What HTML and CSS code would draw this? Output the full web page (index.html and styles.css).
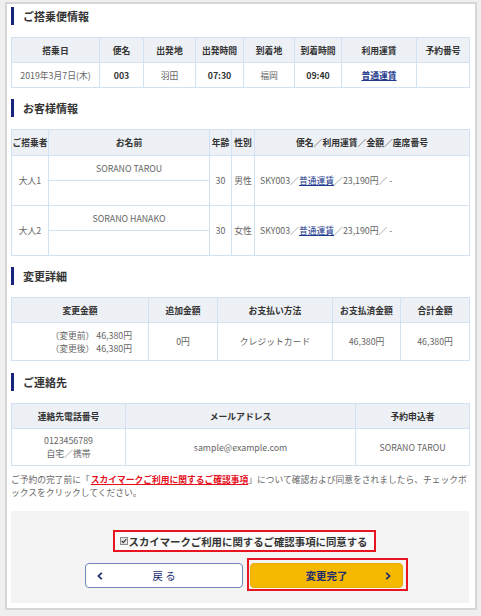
FILE: index.html
```html
<!DOCTYPE html>
<html lang="ja">
<head>
<meta charset="utf-8">
<title>変更内容の確認</title>
<link rel="stylesheet" href="styles.css">
</head>
<body>
<div class="page">

  <section class="sec">
    <h2 class="sec-title">ご搭乗便情報</h2>
    <table class="tbl tbl-flight">
      <colgroup>
        <col style="width:88px"><col style="width:44px"><col style="width:52px"><col style="width:48px">
        <col style="width:51px"><col style="width:47px"><col style="width:75px"><col style="width:53px">
      </colgroup>
      <tr>
        <th>搭乗日</th><th>便名</th><th>出発地</th><th>出発時間</th>
        <th>到着地</th><th>到着時間</th><th>利用運賃</th><th>予約番号</th>
      </tr>
      <tr>
        <td>2019年3月7日(木)</td>
        <td class="strong">003</td>
        <td>羽田</td>
        <td class="strong">07:30</td>
        <td>福岡</td>
        <td class="strong">09:40</td>
        <td><a class="fare strong" href="#">普通運賃</a></td>
        <td></td>
      </tr>
    </table>
  </section>

  <section class="sec">
    <h2 class="sec-title">お客様情報</h2>
    <table class="tbl tbl-pax">
      <colgroup>
        <col style="width:37px"><col style="width:161px"><col style="width:22px"><col style="width:23px"><col style="width:215px">
      </colgroup>
      <tr>
        <th>ご搭乗者</th><th>お名前</th><th>年齢</th><th>性別</th><th>便名／利用運賃／金額／座席番号</th>
      </tr>
      <tr>
        <td rowspan="2">大人1</td>
        <td>SORANO TAROU</td>
        <td rowspan="2">30</td>
        <td rowspan="2">男性</td>
        <td rowspan="2" class="left">SKY003／<a class="fare" href="#">普通運賃</a>／23,190円／ -</td>
      </tr>
      <tr><td></td></tr>
      <tr>
        <td rowspan="2">大人2</td>
        <td>SORANO HANAKO</td>
        <td rowspan="2">30</td>
        <td rowspan="2">女性</td>
        <td rowspan="2" class="left">SKY003／<a class="fare" href="#">普通運賃</a>／23,190円／ -</td>
      </tr>
      <tr><td></td></tr>
    </table>
  </section>

  <section class="sec">
    <h2 class="sec-title">変更詳細</h2>
    <table class="tbl tbl-change">
      <colgroup>
        <col style="width:137px"><col style="width:69px"><col style="width:115px"><col style="width:68px"><col style="width:69px">
      </colgroup>
      <tr>
        <th>変更金額</th><th>追加金額</th><th>お支払い方法</th><th>お支払済金額</th><th>合計金額</th>
      </tr>
      <tr>
        <td class="amounts">（変更前） 46,380円<br>（変更後） 46,380円</td>
        <td>0円</td>
        <td>クレジットカード</td>
        <td>46,380円</td>
        <td>46,380円</td>
      </tr>
    </table>
  </section>

  <section class="sec sec-contact">
    <h2 class="sec-title">ご連絡先</h2>
    <table class="tbl tbl-contact">
      <colgroup>
        <col style="width:114px"><col style="width:230px"><col style="width:114px">
      </colgroup>
      <tr>
        <th>連絡先電話番号</th><th>メールアドレス</th><th>予約申込者</th>
      </tr>
      <tr>
        <td>0123456789<br>自宅／携帯</td>
        <td>sample@example.com</td>
        <td>SORANO TAROU</td>
      </tr>
    </table>
  </section>

  <p class="notice">ご予約の完了前に「<a class="terms" href="#">スカイマークご利用に関するご確認事項</a>」について確認および同意をされましたら、チェックボ<br>ックスをクリックしてください。</p>

  <div class="actions">
    <label class="agree">
      <span class="cb">
        <svg width="8" height="8" viewBox="0 0 8 8"><rect x="0.5" y="0.5" width="7" height="7" fill="#e4e4e4" stroke="#8c8c8c"/><polyline points="1.8,4 3.3,5.6 6.2,2.2" fill="none" stroke="#3a3a3a" stroke-width="1.2"/></svg>
      </span>
      <span>スカイマークご利用に関するご確認事項に同意する</span>
    </label>
    <div class="btn-row">
      <a class="btn btn-back" href="#">
        <svg class="chev" width="6" height="8" viewBox="0 0 6 8"><polyline points="4.8,0.8 1.4,4 4.8,7.2" fill="none" stroke="#1c2b6e" stroke-width="1.7"/></svg>
        <span class="btn-label">戻 る</span>
        <span></span>
      </a>
      <div class="focus-ring">
        <a class="btn btn-done" href="#">
          <span></span>
          <span class="btn-label">変更完了</span>
          <svg class="chev" width="6" height="8" viewBox="0 0 6 8"><polyline points="1.2,0.8 4.6,4 1.2,7.2" fill="none" stroke="#1c2b6e" stroke-width="1.7"/></svg>
        </a>
      </div>
    </div>
  </div>

</div>
</body>
</html>
```

FILE: styles.css
```css
* { box-sizing: border-box; }

html, body { margin: 0; }

body {
  background: #efefef;
  font-family: "Noto Sans CJK JP", "Noto Sans", sans-serif;
  font-size: 8.8px;
  color: #666;
}

.page {
  width: 472px;
  margin: 2px 0 0 5px;
  border: 2px solid #d6d6d6;
  background: #fff;
  padding: 3px 6px 5px 4px;
}

/* section heading with navy accent bar */
.sec-title {
  margin: 0 0 12px;
  height: 18px;
  border-left: 3px solid #18247a;
  padding-left: 9px;
  font-size: 11px;
  font-weight: bold;
  line-height: 18px;
  color: #333;
}

/* data tables */
.tbl {
  width: 100%;
  border-collapse: collapse;
  table-layout: fixed;
  margin-bottom: 11px;
}

.tbl th,
.tbl td {
  border: 1px solid #d3e2f2;
  padding: 0 1px;
  text-align: center;
  vertical-align: middle;
  line-height: 13px;
  height: 25px;
  white-space: nowrap;
}

.tbl th {
  background: #edf0f4;
  color: #333;
  font-weight: bold;
  padding: 0;
}

.tbl td.left {
  text-align: left;
  padding-left: 5px;
}

.strong {
  font-weight: bold;
  color: #333;
}

.fare {
  color: #1d3a8e;
  text-decoration: underline;
}

.tbl-pax th { height: 26px; }

.tbl-change { margin-bottom: 12px; }

.tbl-change td { height: 38px; }

.tbl-change td.amounts {
  text-align: right;
  padding-right: 16px;
}

.tbl-contact td { height: 37px; }

.sec-contact .tbl { margin-bottom: 7px; }

/* agreement notice */
.notice {
  margin: 0 0 12px;
  font-size: 8.75px;
  line-height: 13px;
  color: #666;
  white-space: nowrap;
}

.terms {
  margin-left: 1px;
  color: #e60f1c;
  font-weight: bold;
  text-decoration: underline;
}

/* action panel */
.actions {
  background: #f4f4f4;
  padding: 19px 0 12px;
  display: flex;
  flex-direction: column;
  align-items: center;
}

.agree {
  display: flex;
  align-items: center;
  height: 22px;
  margin-left: 9px;
  padding: 0 7px 0 5px;
  border: 2px solid #e8141f;
  background: #fafafa;
  font-size: 10.4px;
  font-weight: bold;
  color: #333;
}

.cb {
  display: flex;
  margin-right: 1px;
}

.btn-row {
  display: flex;
  align-items: flex-start;
  gap: 4px;
  margin-top: 6px;
  margin-left: 13px;
}

.btn {
  display: grid;
  grid-template-columns: 16px 1fr 16px;
  align-items: center;
  height: 25px;
  border-radius: 4px;
  text-decoration: none;
  color: #1c2b6e;
  font-size: 10.4px;
}

.btn-label { text-align: center; }

.btn-back {
  width: 158px;
  margin-top: 5px;
  padding: 0 11px;
  background: #fff;
  border: 1px solid #7088bb;
}

.focus-ring {
  border: 2px solid #e8141f;
  padding: 3px 3px 1px 1px;
}

.btn-done {
  width: 153px;
  padding: 0 11px;
  background: #f5b800;
  border: 1px solid #e8ad00;
  font-weight: bold;
}

.btn-done .chev { justify-self: end; }
```
